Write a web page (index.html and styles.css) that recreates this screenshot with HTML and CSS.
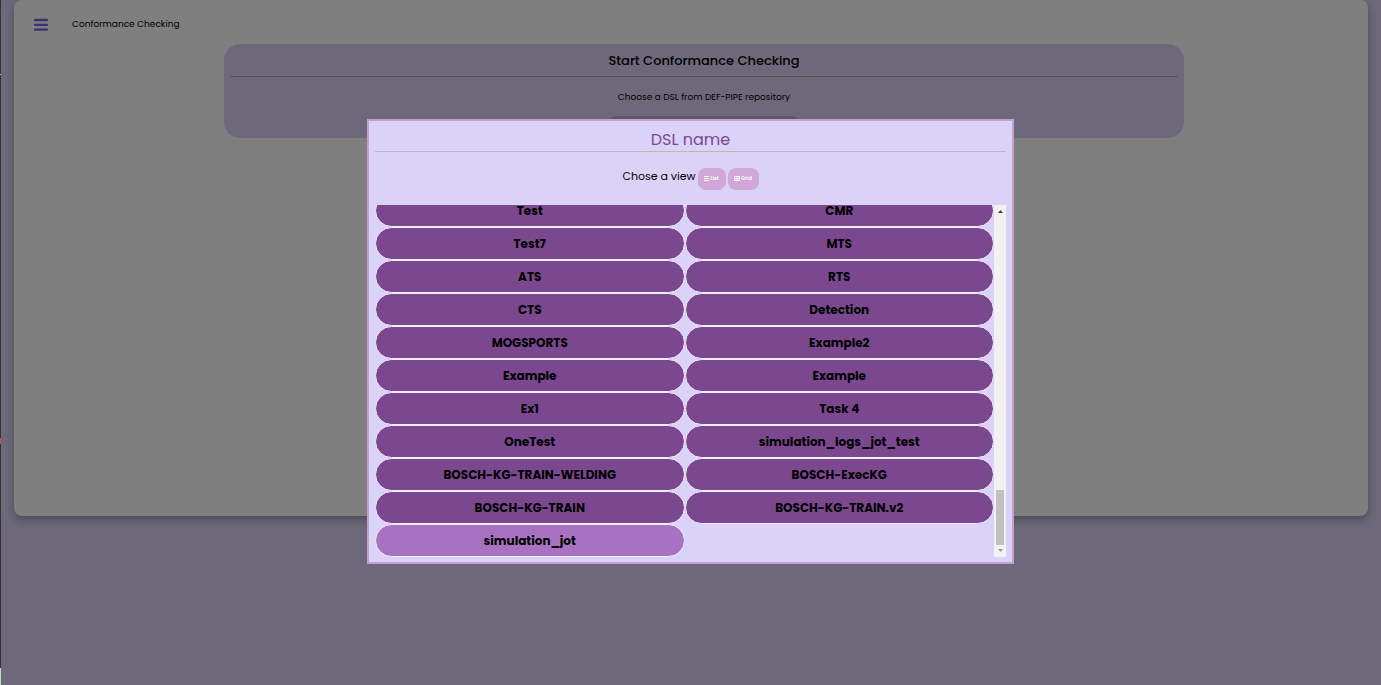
FILE: index.html
```html
<!DOCTYPE html>
<html lang="en">
<head>
<meta charset="utf-8">
<title>Conformance Checking</title>
<link rel="stylesheet" href="styles.css">
</head>
<body>
<main class="page">
  <section class="card">
    <header class="topbar">
      <button class="menu" type="button" aria-label="Menu">
        <svg width="14" height="14" viewBox="0 0 14 14"><path d="M1 2h12M1 6.800h12M1 11.600h12" fill="none" stroke="#7b5fe8" stroke-width="2.300" stroke-linecap="round"/></svg>
      </button>
      <span>Conformance Checking</span>
    </header>
    <div class="panel">
      <h1 class="panel-title">Start Conformance Checking</h1>
      <p class="panel-text">Choose a DSL from DEF-PIPE repository</p>
      <button class="choose" type="button" aria-label="Choose DSL"></button>
    </div>
  </section>
</main>
<div class="overlay">
  <div class="modal" role="dialog" aria-labelledby="dsl-title">
    <h2 class="modal-title" id="dsl-title">DSL name</h2>
    <div class="views">
      <span class="views-label">Chose a view</span>
      <button class="view" type="button"><svg width="5" height="5" viewBox="0 0 5 5"><path d="M0 .5h5M0 2.500h5M0 4.500h5" stroke="#fff"/></svg>List</button>
      <button class="view" type="button"><svg width="6" height="5" viewBox="0 0 6 5"><path d="M.5 .5h5v4h-5zM3 .5v4M.5 2.500h5" fill="none" stroke="#fff"/></svg>Grid</button>
    </div>
    <div class="list">
      <div class="items">
        <button class="item" type="button">Test</button>
        <button class="item" type="button">CMR</button>
        <button class="item" type="button">Test7</button>
        <button class="item" type="button">MTS</button>
        <button class="item" type="button">ATS</button>
        <button class="item" type="button">RTS</button>
        <button class="item" type="button">CTS</button>
        <button class="item" type="button">Detection</button>
        <button class="item" type="button">MOGSPORTS</button>
        <button class="item" type="button">Example2</button>
        <button class="item" type="button">Example</button>
        <button class="item" type="button">Example</button>
        <button class="item" type="button">Ex1</button>
        <button class="item" type="button">Task 4</button>
        <button class="item" type="button">OneTest</button>
        <button class="item" type="button">simulation_logs_jot_test</button>
        <button class="item" type="button">BOSCH-KG-TRAIN-WELDING</button>
        <button class="item" type="button">BOSCH-ExecKG</button>
        <button class="item" type="button">BOSCH-KG-TRAIN</button>
        <button class="item" type="button">BOSCH-KG-TRAIN.v2</button>
        <button class="item active" type="button">simulation_jot</button>
      </div>
      <div class="scrollbar">
        <svg width="12" height="12" viewBox="0 0 12 12"><path d="M4 8l2.500-3L9 8z" fill="#444"/></svg>
        <div class="thumb"></div>
        <svg width="12" height="12" viewBox="0 0 12 12"><path d="M4 4h5L6.500 7z" fill="#999"/></svg>
      </div>
    </div>
  </div>
</div>
<div class="edge"></div>
</body>
</html>
```
FILE: styles.css
```css
* { box-sizing: border-box; }
body {
  margin: 0;
  min-height: 100vh;
  background: #dad3f6;
  color: #000;
  font-family: Poppins, Inter, "Open Sans", sans-serif;
}
button { font-family: inherit; padding: 0; border: 0; cursor: pointer; }
h1, h2, p { margin: 0; }
.page { padding: 0 13px 0 14px; }
.card {
  min-height: 516px;
  padding: 16px 20px;
  border-radius: 8px;
  background: #fff;
  box-shadow: 0 4px 10px rgba(0, 0, 0, .3);
}
.topbar {
  display: flex;
  align-items: center;
  gap: 24px;
  height: 16px;
  font-size: 9px;
}
.menu { display: flex; margin-top: 2px; background: none; }
.panel {
  display: flex;
  flex-direction: column;
  align-items: center;
  width: 74%;
  max-width: 960px;
  height: 94px;
  margin: 12px 164px 0 auto;
  padding: 0 6px;
  border-radius: 16px;
  background: #dad3f6;
  overflow: hidden;
}
.panel-title {
  width: 100%;
  height: 33px;
  border-bottom: 1px solid #aba99a;
  font-size: 13px;
  font-weight: 500;
  line-height: 33px;
  text-align: center;
}
.panel-text { margin-top: 12px; font-size: 9px; line-height: 16px; }
.choose {
  flex: none;
  width: 192px;
  height: 20px;
  margin-top: 11px;
  border-radius: 8px;
  background: #d3a4cf;
}
.overlay {
  position: fixed;
  inset: 0;
  display: flex;
  align-items: center;
  justify-content: center;
  padding-bottom: 2px;
  background: rgba(0, 0, 0, .5);
}
.modal {
  width: 47%;
  max-width: 647px;
  padding: 6px 6px 5px;
  border: 2px solid #c4a0d0;
  background: #dad3f7;
}
.modal-title {
  height: 25px;
  border-bottom: 1px solid #bab3cf;
  box-shadow: 0 1px #dad5dd;
  color: #7a4890;
  font-size: 16px;
  font-weight: 400;
  line-height: 26px;
  text-align: center;
}
.views {
  display: flex;
  align-items: center;
  justify-content: center;
  gap: 2px;
  height: 53px;
  font-size: 11px;
}
.views-label { padding-bottom: 4px; }
.view {
  display: flex;
  align-items: center;
  justify-content: center;
  gap: 1px;
  width: 28px;
  height: 22px;
  border-radius: 8px;
  background: #d0a7d8;
  color: #fff;
  font-size: 5px;
  font-weight: 600;
}
.view + .view { width: 31px; }
.list { display: flex; height: 352px; overflow: hidden; }
.items {
  display: grid;
  flex: 1;
  grid-template-columns: 1fr 1fr;
  grid-auto-rows: 33px;
  align-content: end;
}
.item {
  border: 1px solid #f4eefc;
  border-radius: 17px;
  background: #7b4890;
  color: #000;
  font-size: 12px;
  font-weight: 700;
}
.active { background: #a971c1; }
.scrollbar {
  display: flex;
  flex-direction: column;
  width: 12px;
  background: #f1f1f1;
}
.thumb {
  height: 55px;
  margin: auto 2px 0;
  background: #c1c1c1;
}
.edge {
  position: fixed;
  inset: 0 auto 0 0;
  width: 1px;
  background: linear-gradient(#333 74px, #bbb 74px 75px, #333 75px 438px, #e54545 438px 444px, #333 444px 668px, #b9dcbf 668px);
}
```
